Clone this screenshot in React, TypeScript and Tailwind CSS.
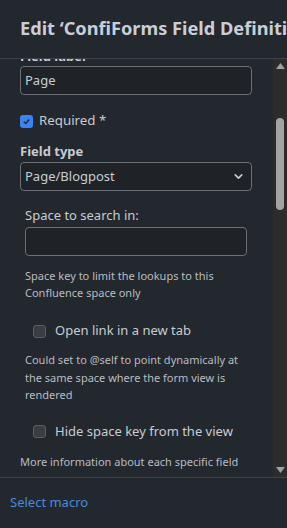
import { ChevronDown } from "lucide-react";

const font = { fontFamily: '"Noto Sans", "Open Sans", sans-serif' };

function Box({ checked }: { checked?: boolean }) {
  if (checked) {
    return (
      <span className="flex h-[13px] w-[13px] shrink-0 items-center justify-center rounded-[3px] bg-[#3b82f6]">
        <svg width="9" height="9" viewBox="0 0 10 10">
          <path d="M2 5.2 L4.2 7.3 L8 2.8" fill="none" stroke="#1e2a3c" strokeWidth="1.6" />
        </svg>
      </span>
    );
  }
  return <span className="h-[13px] w-[13px] shrink-0 rounded-[3px] border border-[#5b5f65] bg-[#3a3d41]" />;
}

export default function App() {
  return (
    <div className="flex h-[528px] w-[287px] flex-col overflow-hidden bg-[#23272e]" style={font}>
      <div className="flex h-[59px] shrink-0 items-center border-b border-[#3d4248] pl-5">
        <h1 className="whitespace-nowrap text-[18.2px] font-bold text-[#c9ced6]">Edit ‘ConfiForms Field Definition’</h1>
      </div>

      <div className="flex min-h-0 flex-1">
        <div className="min-w-0 flex-1 overflow-hidden pl-5 pr-[21px]">
          <div className="-mt-[12px] text-[13px] font-bold leading-[18px] text-[#c7ccd2]">Field label</div>
          <div className="mt-[1px] flex h-[29px] items-center rounded-[4px] border border-[#6b7079] bg-[#1f2328] px-[4px] text-[13px] text-[#c7ccd2]">
            Page
          </div>

          <label className="mt-[16px] flex h-[20px] items-center gap-[6px] text-[13.3px] text-[#c7ccd2]">
            <Box checked />
            Required *
          </label>

          <div className="mt-[11px] text-[13px] font-bold leading-[18px] text-[#c7ccd2]">Field type</div>
          <div className="mt-[2px] flex h-[29px] items-center justify-between rounded-[4px] border border-[#6b7079] bg-[#1f2328] pl-[4px] pr-[6px] text-[13px] text-[#c7ccd2]">
            Page/Blogpost
            <ChevronDown size={13} strokeWidth={3} className="text-[#c7ccd2]" />
          </div>

          <div className="px-[5px] pt-[15px]">
            <div className="text-[13px] leading-[18px] text-[#c7ccd2]">Space to search in:</div>
            <div className="mt-[3px] h-[29px] rounded-[4px] border border-[#6b7079] bg-[#1f2328]" />
            <p className="mt-[12px] text-[11px] leading-[16.5px] text-[#b8bcc2]">
              Space key to limit the lookups to this Confluence space only
            </p>

            <label className="mt-[20px] flex h-[20px] items-center gap-[9px] pl-[8px] text-[13px] text-[#c7ccd2]">
              <Box />
              Open link in a new tab
            </label>

            <p className="mt-[10px] text-[11px] leading-[17.5px] text-[#b8bcc2]">
              Could set to @self to point dynamically at the same space where the form view is rendered
            </p>

            <label className="mt-[18px] flex h-[20px] items-center gap-[9px] pl-[8px] text-[13px] text-[#c7ccd2]">
              <Box />
              Hide space key from the view
            </label>
          </div>

          <p className="mt-[10px] text-[11px] leading-[20px] text-[#b8bcc2]">
            More information about each specific field type you can read in the documentation
          </p>
        </div>

        <div className="flex w-[14px] shrink-0 flex-col items-center bg-[#2c2c2c] py-[4px]">
          <svg width="9" height="6" viewBox="0 0 9 6">
            <path d="M0 6 L4.5 0 L9 6 Z" fill="#a0a0a0" />
          </svg>
          <div className="mt-[49px] h-[92px] w-[8px] rounded-full bg-[#a3a3a3]" />
          <div className="flex-1" />
          <svg width="9" height="6" viewBox="0 0 9 6">
            <path d="M0 0 L4.5 6 L9 0 Z" fill="#a0a0a0" />
          </svg>
        </div>
      </div>

      <div className="flex h-[51px] shrink-0 items-center border-t border-[#3d4248] pl-[10px]">
        <a className="text-[13px] text-[#4b8ad6]">Select macro</a>
      </div>
    </div>
  );
}
